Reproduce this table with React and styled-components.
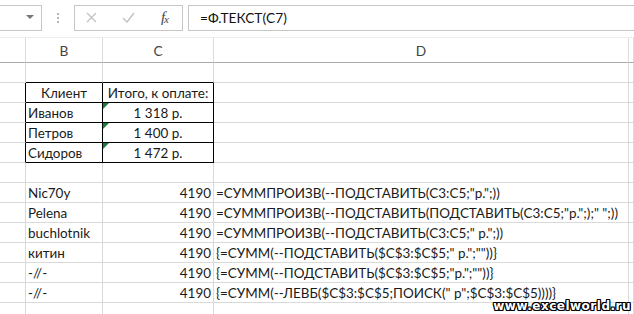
import React from "react";
import styled, { createGlobalStyle } from "styled-components";

const GlobalStyle = createGlobalStyle`
  html, body {
    margin: 0;
    padding: 0;
    background: #fff;
    overflow: hidden;
  }
  body {
    font-family: Lato, "Open Sans", sans-serif;
    color: #222;
  }
`;

const COLS = "26px 77px 111px 415px 1fr";
const GRID = "#d9d9d9";
const FONT = "13.45px";

const Page = styled.div`
  position: relative;
  width: 634px;
  height: 314px;
  overflow: hidden;
  background: #fff;
`;

const FormulaBar = styled.div`
  display: flex;
  align-items: center;
  height: 38px;
  box-sizing: border-box;
  border-bottom: 1px solid #ececec;
`;

const Box = styled.div`
  height: 26px;
  box-sizing: border-box;
  border: 1px solid #c6c6c6;
  background: #fff;
  display: flex;
  align-items: center;
  margin-top: -2px;
`;

const NameBox = styled(Box)`
  width: 43px;
  margin-left: -1px;
  justify-content: flex-end;
  padding-right: 7px;
`;

const Arrow = styled.span`
  width: 0;
  height: 0;
  border-left: 4px solid transparent;
  border-right: 4px solid transparent;
  border-top: 4px solid #777;
  margin-top: -1px;
`;

const Grip = styled.div`
  width: 32px;
  display: flex;
  flex-direction: column;
  align-items: center;
  gap: 2px;
  margin-top: -2px;
  span {
    width: 2px;
    height: 2px;
    background: #b5b5b5;
  }
`;

const FxBox = styled(Box)`
  width: 109px;
  justify-content: space-between;
  padding: 0 14px 0 11px;
`;

const Mark = styled.span`
  display: flex;
  align-items: center;
`;

const Fx = styled.span`
  font-family: "Liberation Serif", serif;
  font-style: italic;
  font-size: 15px;
  color: #444;
  letter-spacing: -1px;
  sub {
    font-size: 11px;
    vertical-align: -1px;
  }
`;

const InputBox = styled(Box)`
  flex: 1;
  margin-left: 5px;
  margin-right: -2px;
  padding-left: 11px;
  font-size: 13.7px;
  color: #111;
`;

const Row = styled.div`
  display: grid;
  grid-template-columns: ${COLS};
  height: ${(p) => (p.$head ? "25px" : "20px")};
`;

const HeadCell = styled.div`
  box-sizing: border-box;
  border-bottom: 1px solid #ababab;
  border-right: 1px solid #dcdcdc;
  display: flex;
  align-items: center;
  justify-content: center;
  font-size: 13.7px;
  color: #444;
  padding-top: 1px;
`;

const Cell = styled.div`
  position: relative;
  box-sizing: border-box;
  border-right: 1px solid ${(p) => (p.$rb ? "#000" : GRID)};
  border-bottom: 1px solid ${(p) => (p.$bb ? "#000" : GRID)};
  display: flex;
  align-items: center;
  justify-content: ${(p) =>
    p.$align === "center" ? "center" : p.$align === "right" ? "flex-end" : "flex-start"};
  padding: 0 2px 0 2px;
  font-size: ${FONT};
  white-space: nowrap;
  overflow: visible;
  color: #1a1a1a;
  z-index: ${(p) => (p.$over ? 1 : 0)};
`;

const Flag = styled.span`
  position: absolute;
  left: 0;
  top: 0;
  width: 0;
  height: 0;
  border-top: 6px solid #1f7a3d;
  border-right: 6px solid transparent;
`;

const Watermark = styled.div`
  position: absolute;
  right: 3px;
  bottom: 1px;
  font-family: "DejaVu Sans", sans-serif;
  font-weight: bold;
  font-size: 12px;
  letter-spacing: 0.5px;
  color: #fff;
  text-shadow: 1px 0 0 #000, -1px 0 0 #000, 0 1px 0 #000, 0 -1px 0 #000,
    1px 1px 0 #000, -1px -1px 0 #000, 1px -1px 0 #000, -1px 1px 0 #000;
  z-index: 3;
`;

const table = [
  ["", "", "", ""],
  ["Клиент", "Итого, к оплате:", "", "head"],
  ["Иванов", "1 318 р.", "", "data"],
  ["Петров", "1 400 р.", "", "data"],
  ["Сидоров", "1 472 р.", "", "data"],
  ["", "", "", ""],
  ["Nic70y", "4190", '=СУММПРОИЗВ(--ПОДСТАВИТЬ(C3:C5;"р.";))'],
  ["Pelena", "4190", '=СУММПРОИЗВ(--ПОДСТАВИТЬ(ПОДСТАВИТЬ(C3:C5;"р.";);" ";))'],
  ["buchlotnik", "4190", '=СУММПРОИЗВ(--ПОДСТАВИТЬ(C3:C5;" р.";))'],
  ["китин", "4190", '{=СУММ(--ПОДСТАВИТЬ($C$3:$C$5;" р.";""))}'],
  ["-//-", "4190", '{=СУММ(--ПОДСТАВИТЬ($C$3:$C$5;"р.";""))}'],
  ["-//-", "4190", '{=СУММ(--ЛЕВБ($C$3:$C$5;ПОИСК(" р";$C$3:$C$5))))}'],
  ["", "", ""],
];

export default function App() {
  return (
    <Page>
      <GlobalStyle />
      <FormulaBar>
        <NameBox>
          <Arrow />
        </NameBox>
        <Grip>
          <span />
          <span />
          <span />
        </Grip>
        <FxBox>
          <Mark>
            <svg width="11" height="11" viewBox="0 0 11 11">
              <path d="M1 1 L10 10 M10 1 L1 10" stroke="#c4c4c4" strokeWidth="1.4" fill="none" />
            </svg>
          </Mark>
          <Mark>
            <svg width="13" height="11" viewBox="0 0 13 11">
              <path d="M1 6 L5 10 L12 1" stroke="#c4c4c4" strokeWidth="1.5" fill="none" />
            </svg>
          </Mark>
          <Fx>
            f<sub>x</sub>
          </Fx>
        </FxBox>
        <InputBox>=Ф.ТЕКСТ(C7)</InputBox>
      </FormulaBar>
      <Row $head>
        <HeadCell />
        <HeadCell>B</HeadCell>
        <HeadCell>C</HeadCell>
        <HeadCell>D</HeadCell>
        <HeadCell />
      </Row>
      {table.map((r, i) => {
        const kind = r[3];
        const inTable = kind === "head" || kind === "data";
        const aboveTable = i === 0;
        return (
          <Row key={i}>
            <Cell $rb={inTable} />
            <Cell $rb={inTable} $bb={inTable || aboveTable} $align={kind === "head" ? "center" : "left"}>
              {r[0]}
            </Cell>
            <Cell
              $rb={inTable}
              $bb={inTable || aboveTable}
              $align={inTable ? "center" : "right"}
            >
              {kind === "data" && <Flag />}
              {r[1]}
            </Cell>
            <Cell $over>{r[2]}</Cell>
            <Cell />
          </Row>
        );
      })}
      <Watermark>www.excelworld.ru</Watermark>
    </Page>
  );
}
